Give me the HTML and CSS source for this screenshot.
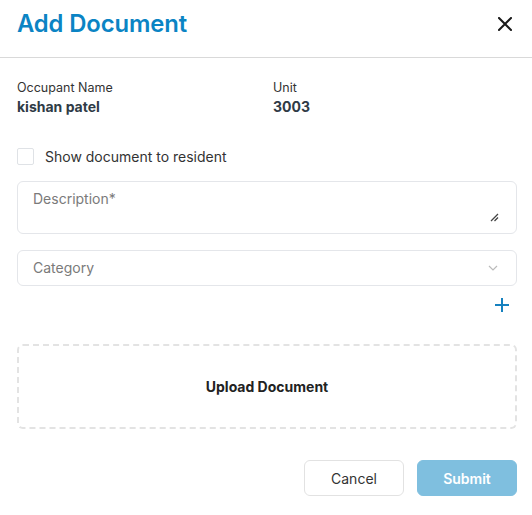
FILE: index.html
```html
<!DOCTYPE html>
<html>
<head>
<meta charset="utf-8">
<link rel="stylesheet" href="styles.css">
</head>
<body>
<div class="modal">
  <div class="header">
    <h1 class="title">Add Document</h1>
    <button class="close" aria-label="Close">
      <svg width="14" height="14" viewBox="0 0 14 14"><path d="M1 1L13 13M13 1L1 13" stroke="#1a1a1a" stroke-width="2" stroke-linecap="square"/></svg>
    </button>
  </div>
  <div class="body">
    <div class="info">
      <div class="info-col">
        <div class="label">Occupant Name</div>
        <div class="value">kishan patel</div>
      </div>
      <div class="info-col">
        <div class="label">Unit</div>
        <div class="value">3003</div>
      </div>
    </div>
    <label class="check">
      <span class="box"></span>
      <span class="check-text">Show document to resident</span>
    </label>
    <div class="textarea">
      <span class="placeholder">Description*</span>
      <svg class="resize" width="9" height="9" viewBox="0 0 9 9"><path d="M1 8L8 1M4.5 8L8 4.5" stroke="#444" stroke-width="1.3"/></svg>
    </div>
    <div class="select">
      <span class="placeholder">Category</span>
      <svg width="10" height="6" viewBox="0 0 10 6"><path d="M1 1L5 5L9 1" fill="none" stroke="#bbb" stroke-width="1.2"/></svg>
    </div>
    <div class="add-row">
      <svg width="16" height="16" viewBox="0 0 16 16"><path d="M8 1V15M1 8H15" stroke="#1681bf" stroke-width="2"/></svg>
    </div>
    <div class="upload">Upload Document</div>
    <div class="actions">
      <button class="btn cancel">Cancel</button>
      <button class="btn submit">Submit</button>
    </div>
  </div>
</div>
</body>
</html>
```
FILE: styles.css
```css
* { box-sizing: border-box; }
html, body { margin: 0; padding: 0; background: #fff; }
body { font-family: Inter, "Noto Sans", sans-serif; color: #333; }
.modal { width: 532px; }
.header {
  display: flex; align-items: center; justify-content: space-between;
  height: 58px; padding: 0 20px 0 17px;
  border-bottom: 1px solid #d9d9d9;
}
.title { margin: 0; font-size: 23.8px; font-weight: 600; color: #0b84c4; letter-spacing: -0.1px; position: relative; top: -5px; }
.close { border: 0; background: none; padding: 0; width: 14px; height: 14px; position: relative; top: -5px; cursor: pointer; }
.close svg { display: block; }
.body { padding: 22px 15px 0 17px; }
.info { display: flex; }
.info-col { flex: 0 0 256px; }
.label { font-size: 12.5px; color: #333; line-height: 16px; }
.value { font-size: 14px; font-weight: 700; color: #2f3b46; line-height: 20px; margin-top: 1px; }
.check { display: flex; align-items: center; margin-top: 30px; height: 18px; }
.box { width: 17px; height: 17px; border: 1px solid #dfe2e6; border-radius: 2px; }
.check-text { margin-left: 11px; font-size: 14px; color: #333; }
.textarea {
  position: relative; margin-top: 16px; height: 53px;
  border: 1px solid #e4e6ea; border-radius: 6px; padding: 6px 15px;
}
.placeholder { font-size: 14px; color: #7a7a7a; line-height: 18px; }
.resize { position: absolute; right: 17px; bottom: 11px; }
.select {
  display: flex; align-items: center; justify-content: space-between;
  margin-top: 16px; height: 36px; border: 1px solid #e4e6ea; border-radius: 6px;
  padding: 0 18px 0 15px;
}
.add-row { display: flex; justify-content: flex-end; padding-right: 7px; margin-top: 11px; height: 16px; }
.add-row svg { display: block; }
.upload {
  margin-top: 31px; height: 85px; border: 2px dashed #e3e3e3; border-radius: 6px;
  display: flex; align-items: center; justify-content: center;
  font-size: 14px; font-weight: 700; color: #222;
}
.actions { display: flex; justify-content: flex-end; gap: 13px; margin-top: 31px; }
.btn { height: 36px; border-radius: 6px; font-family: inherit; font-size: 14px; padding: 0; }
.cancel { width: 100px; background: #fff; border: 1px solid #e2e2e2; color: #333; }
.submit { width: 100px; background: #7fbfdf; border: 1px solid #7fbfdf; color: #fff; font-weight: 600; }
```
